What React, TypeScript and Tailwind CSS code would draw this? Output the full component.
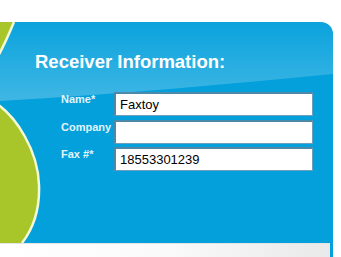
import React from 'react';

const FIELDS = [
  { label: 'Name*', value: 'Faxtoy' },
  { label: 'Company', value: '' },
  { label: 'Fax #*', value: '18553301239' },
];

const Backdrop: React.FC = () => (
  <svg className="absolute inset-0" width="333" height="221" viewBox="0 0 333 221">
    <defs>
      <linearGradient id="gloss" x1="0" y1="0" x2="0" y2="1">
        <stop offset="0" stopColor="#ffffff" stopOpacity="0.03" />
        <stop offset="1" stopColor="#ffffff" stopOpacity="0.24" />
      </linearGradient>
    </defs>
    <path d="M0,0 H333 V52 C230,62 120,72 0,79 Z" fill="url(#gloss)" />
    {/* green wave */}
    <path d="M-3,0 H14 C9,12 4,24 -3,36 Z" fill="#a8c62a" />
    <path d="M14,0 C9,12 4,24 -3,36" fill="none" stroke="#f3f8d6" strokeWidth="2.5" />
    <path d="M-3,82 C16,95 38,128 39,163 C40,190 32,208 22,221 L-3,221 Z" fill="#a8c62a" />
    <path d="M-3,82 C16,95 38,128 39,163 C40,190 32,208 22,221" fill="none" stroke="#f3f8d6" strokeWidth="2.5" />
  </svg>
);

export default function App() {
  return (
    <div className="w-[341px] h-[257px] bg-white overflow-hidden pt-[22px] font-['Liberation_Sans',Arial,sans-serif]">
      <div className="w-[333px] bg-[#03a0dc] rounded-tr-[12px] overflow-hidden">
        <div className="relative h-[221px]">
          <Backdrop />
          <div className="relative pt-[30px]">
            <h1 className="pl-[35px] text-[18.5px] leading-[20px] font-bold text-white">Receiver Information:</h1>
            <div className="mt-[20px] ml-[61px] flex flex-col gap-[3.5px]">
              {FIELDS.map((f) => (
                <div key={f.label} className="flex items-start">
                  <label className="w-[53px] pt-[1px] text-[11px] leading-[13px] font-bold text-[#e2f4fb] whitespace-nowrap">
                    {f.label}
                  </label>
                  <input
                    type="text"
                    defaultValue={f.value}
                    className="w-[199px] h-[24px] bg-white border border-[#6b9fbb] border-t-2 border-l-2 border-t-[#4f89a8] border-l-[#4f89a8] px-[4px] text-[13px] text-black outline-none"
                  />
                </div>
              ))}
            </div>
          </div>
        </div>
        <div className="mr-[3px] h-[40px] bg-gradient-to-r from-white via-[#fafafa] to-[#e9e9e9] border-t border-[#e4e4e4]" />
      </div>
    </div>
  );
}
